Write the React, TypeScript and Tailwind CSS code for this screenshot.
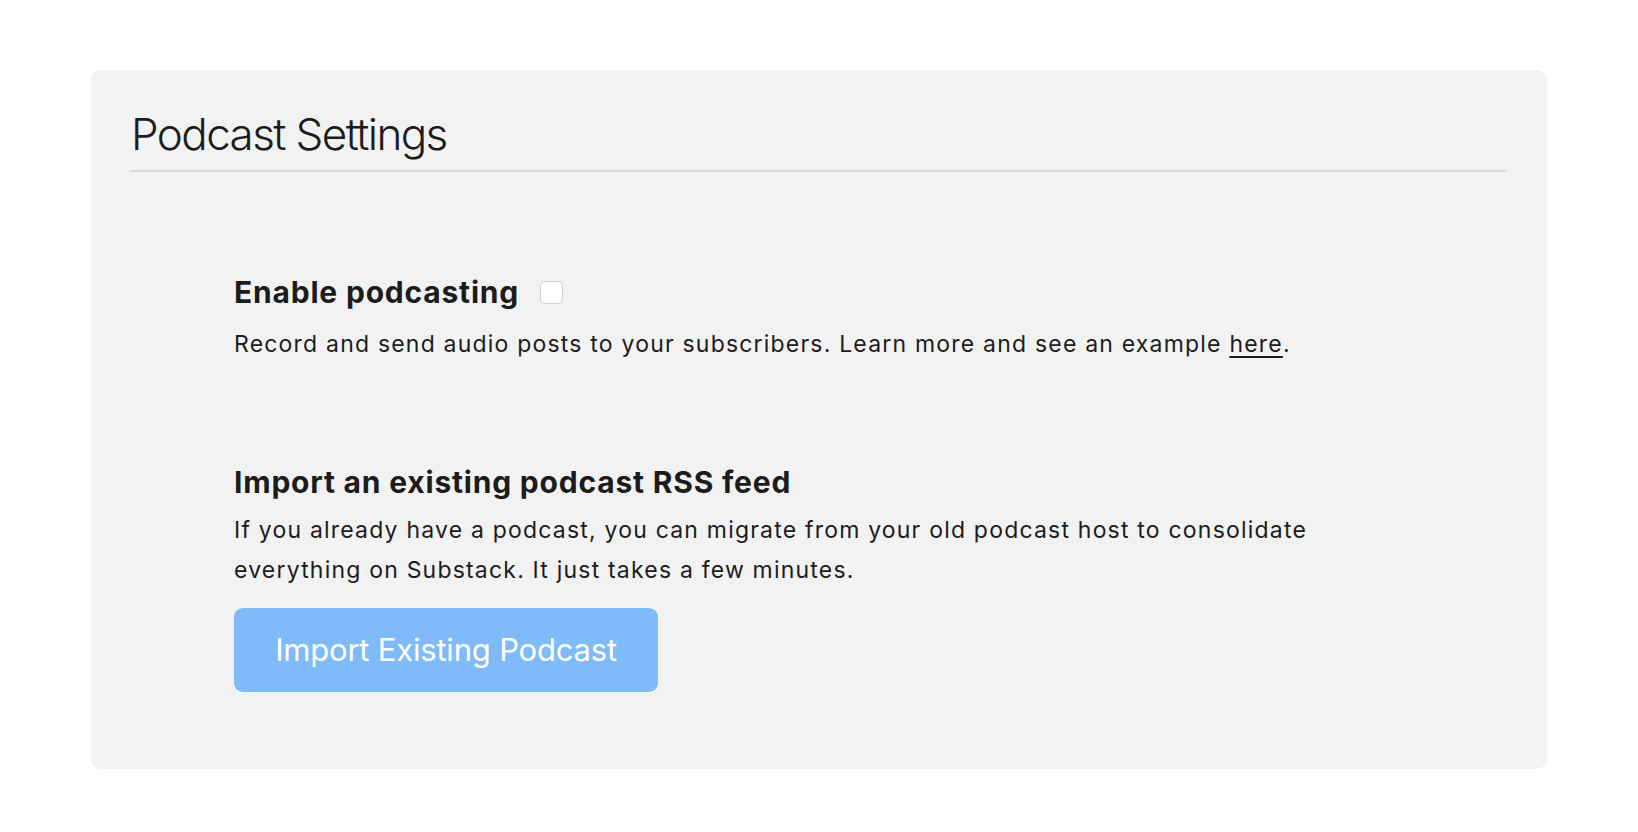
export default function App() {
  return (
    <div className="min-h-screen bg-white px-[91px] pt-[70px] font-['Inter','Noto_Sans',sans-serif] text-[#1c1c1c]">
      <section className="rounded-[10px] bg-[#f2f2f2] px-10 pt-[38px] pb-[77px]">
        <h2 className="text-[44px] leading-[52px] font-light tracking-[-1.6px]">Podcast Settings</h2>
        <div className="mt-[10px] h-[2px] bg-[#dadada]" />

        <div className="pl-[103px]">
          <div className="mt-[102px] flex items-center gap-[21px]">
            <h3 className="text-[30px] leading-[36px] font-bold tracking-[0.8px]">Enable podcasting</h3>
            <input
              type="checkbox"
              className="h-[23px] w-[23px] appearance-none rounded-[5px] border border-[#cfcfcf] bg-white"
            />
          </div>
          <p className="mt-[14px] text-[23px] leading-[40px] tracking-[1.2px]">
            Record and send audio posts to your subscribers. Learn more and see an example{' '}
            <a href="#" className="underline underline-offset-[4px]">
              here
            </a>
            .
          </p>

          <h3 className="mt-[100px] text-[30px] leading-[36px] font-bold tracking-[0.8px]">
            Import an existing podcast RSS feed
          </h3>
          <p className="mt-[10px] max-w-[1095px] text-[23px] leading-[40px] tracking-[1.2px]">
            If you already have a podcast, you can migrate from your old podcast host to consolidate everything on
            Substack. It just takes a few minutes.
          </p>
          <button
            type="button"
            className="mt-[18px] flex h-[84px] w-[424px] items-center justify-center rounded-[9px] bg-[#7fbbf8] text-[31px] tracking-[-0.2px] text-white"
          >
            Import Existing Podcast
          </button>
        </div>
      </section>
    </div>
  )
}
